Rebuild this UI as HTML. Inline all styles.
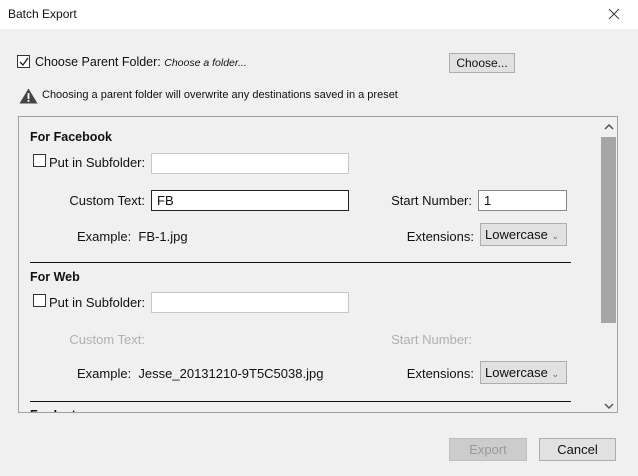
<!DOCTYPE html>
<html><head><style>
*{margin:0;padding:0;box-sizing:border-box}
body{width:638px;height:476px;background:#f0f0f0;font-family:"Liberation Sans",sans-serif;font-size:12px;color:#111;position:relative;overflow:hidden}
.a{position:absolute;white-space:nowrap}
.p{font-size:13px}
.title{left:0;top:0;width:638px;height:29px;background:#fff}
.cb{position:absolute;width:13px;height:13px;border:1px solid #333;background:#fff}
.in{position:absolute;background:#fff;border:1px solid #c8c8c8;height:21px}
.sel{position:absolute;background:#e1e1e1;border:1px solid #adadad;height:23px;padding:3px 0 0 4px;font-size:13px}
.btn{position:absolute;background:#e1e1e1;border:1px solid #adadad;text-align:center}
.r{text-align:right}
</style></head><body>
<div class="a title"></div>
<div class="a" style="left:8px;top:7px;font-size:12px">Batch Export</div>
<svg class="a" style="left:608px;top:8px" width="12" height="12"><path d="M1 1L11 11M11 1L1 11" stroke="#333" stroke-width="0.9"/></svg>

<div class="cb" style="left:17px;top:55px"></div>
<svg class="a" style="left:19px;top:57px" width="10" height="10"><path d="M1 5L4 8L9 1" stroke="#222" fill="none" stroke-width="1.3"/></svg>
<div class="a" style="left:35px;top:55px;font-size:12.5px">Choose Parent Folder: <i style="font-size:10.5px">Choose a folder...</i></div>
<div class="btn" style="left:449px;top:53px;width:66px;height:20px;line-height:18px">Choose...</div>

<svg class="a" style="left:19px;top:88px" width="19" height="16"><path d="M9.5 0.5L18.5 15.5H0.5Z" fill="#444"/><rect x="8.6" y="5" width="1.8" height="6" fill="#fff"/><rect x="8.6" y="12" width="1.8" height="1.8" fill="#fff"/></svg>
<div class="a" style="left:42px;top:89px;font-size:11px">Choosing a parent folder will overwrite any destinations saved in a preset</div>

<div class="a p" style="left:18px;top:116px;width:600px;height:297px;border:1px solid #a0a0a0;overflow:hidden">
 <div class="a" style="left:581px;top:0;width:17px;height:295px;background:#f0f0f0"></div>
 <svg class="a" style="left:585px;top:6px" width="10" height="8"><path d="M1 6L5 2L9 6" stroke="#555" fill="none" stroke-width="1.5"/></svg>
 <div class="a" style="left:582px;top:20px;width:15px;height:186px;background:#a6a6a6"></div>
 <svg class="a" style="left:585px;top:285px" width="10" height="8"><path d="M1 2L5 6L9 2" stroke="#555" fill="none" stroke-width="1.5"/></svg>

 <div class="a" style="left:11px;top:13px;font-weight:bold;font-size:12.5px">For Facebook</div>
 <div class="cb" style="left:14px;top:37px"></div>
 <div class="a" style="left:30px;top:38px">Put in Subfolder:</div>
 <div class="in" style="left:132px;top:36px;width:198px"></div>
 <div class="a r" style="left:0;width:126px;top:76px">Custom Text:</div>
 <div class="in" style="left:132px;top:73px;width:198px;border-color:#222;padding:2px 5px">FB</div>
 <div class="a r" style="left:300px;width:153px;top:76px">Start Number:</div>
 <div class="in" style="left:459px;top:73px;width:89px;border-color:#888;padding:2px 5px">1</div>
 <div class="a" style="left:58px;top:112px">Example:&nbsp; FB-1.jpg</div>
 <div class="a r" style="left:300px;width:155px;top:112px">Extensions:</div>
 <div class="sel" style="left:461px;top:106px;width:87px">Lowercase <span style="font-size:9px;color:#666">&#8964;</span></div>
 <div class="a" style="left:11px;top:145px;width:541px;height:1px;background:#111"></div>

 <div class="a" style="left:11px;top:153px;font-weight:bold;font-size:12.5px">For Web</div>
 <div class="cb" style="left:14px;top:177px"></div>
 <div class="a" style="left:30px;top:178px">Put in Subfolder:</div>
 <div class="in" style="left:132px;top:175px;width:198px"></div>
 <div class="a r" style="left:0;width:126px;top:215px;color:#b0b0b0">Custom Text:</div>
 <div class="a r" style="left:300px;width:153px;top:215px;color:#b0b0b0">Start Number:</div>
 <div class="a" style="left:58px;top:249px">Example:&nbsp; Jesse_20131210-9T5C5038.jpg</div>
 <div class="a r" style="left:300px;width:155px;top:249px">Extensions:</div>
 <div class="sel" style="left:461px;top:244px;width:87px">Lowercase <span style="font-size:9px;color:#666">&#8964;</span></div>
 <div class="a" style="left:11px;top:284px;width:541px;height:1px;background:#111"></div>
 <div class="a" style="left:11px;top:291px;font-weight:bold;font-size:12.5px">For Instagram</div>
</div>

<div class="btn" style="left:449px;top:438px;width:78px;height:23px;line-height:21px;background:#cccccc;border-color:#bfbfbf;color:#999;font-size:13px">Export</div>
<div class="btn" style="left:539px;top:438px;width:77px;height:23px;line-height:21px;font-size:13px">Cancel</div>
</body></html>
